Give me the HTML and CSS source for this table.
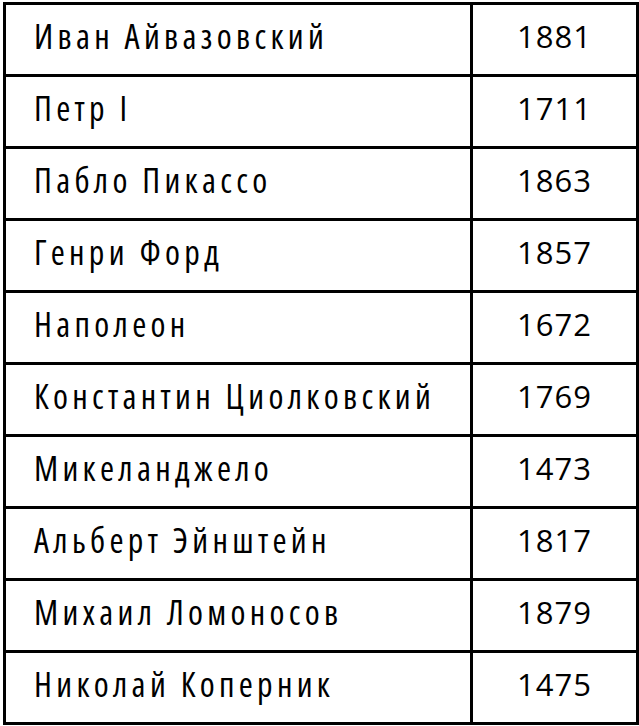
FILE: index.html
```html
<!DOCTYPE html>
<html lang="ru">
<head>
<meta charset="utf-8">
<link rel="stylesheet" href="styles.css">
</head>
<body>
<table class="years">
<tbody>
<tr><td class="name">Иван Айвазовский</td><td class="year">1881</td></tr>
<tr><td class="name">Петр I</td><td class="year">1711</td></tr>
<tr><td class="name">Пабло Пикассо</td><td class="year">1863</td></tr>
<tr><td class="name">Генри Форд</td><td class="year">1857</td></tr>
<tr><td class="name">Наполеон</td><td class="year">1672</td></tr>
<tr><td class="name">Константин Циолковский</td><td class="year">1769</td></tr>
<tr><td class="name">Микеланджело</td><td class="year">1473</td></tr>
<tr><td class="name">Альберт Эйнштейн</td><td class="year">1817</td></tr>
<tr><td class="name">Михаил Ломоносов</td><td class="year">1879</td></tr>
<tr><td class="name">Николай Коперник</td><td class="year">1475</td></tr>
</tbody>
</table>
</body>
</html>
```
FILE: styles.css
```css
html, body {
  margin: 0;
  padding: 0;
  background: #fff;
}
body {
  padding: 2px 0 0 3px;
}
.years {
  border-collapse: collapse;
  font-family: "Open Sans", sans-serif;
  font-size: 33px;
  color: #000;
}
.years td {
  border: 3px solid #000;
  height: 72px;
  padding: 0 0 7px 0;
  box-sizing: border-box;
  vertical-align: middle;
  line-height: 40px;
}
.name {
  width: 467px;
  padding-left: 28px !important;
  font-size: 34px;
  font-stretch: 75%;
  letter-spacing: 4.3px;
}
.year {
  width: 166px;
  text-align: center;
  font-size: 31px;
  letter-spacing: 1px;
}
```
